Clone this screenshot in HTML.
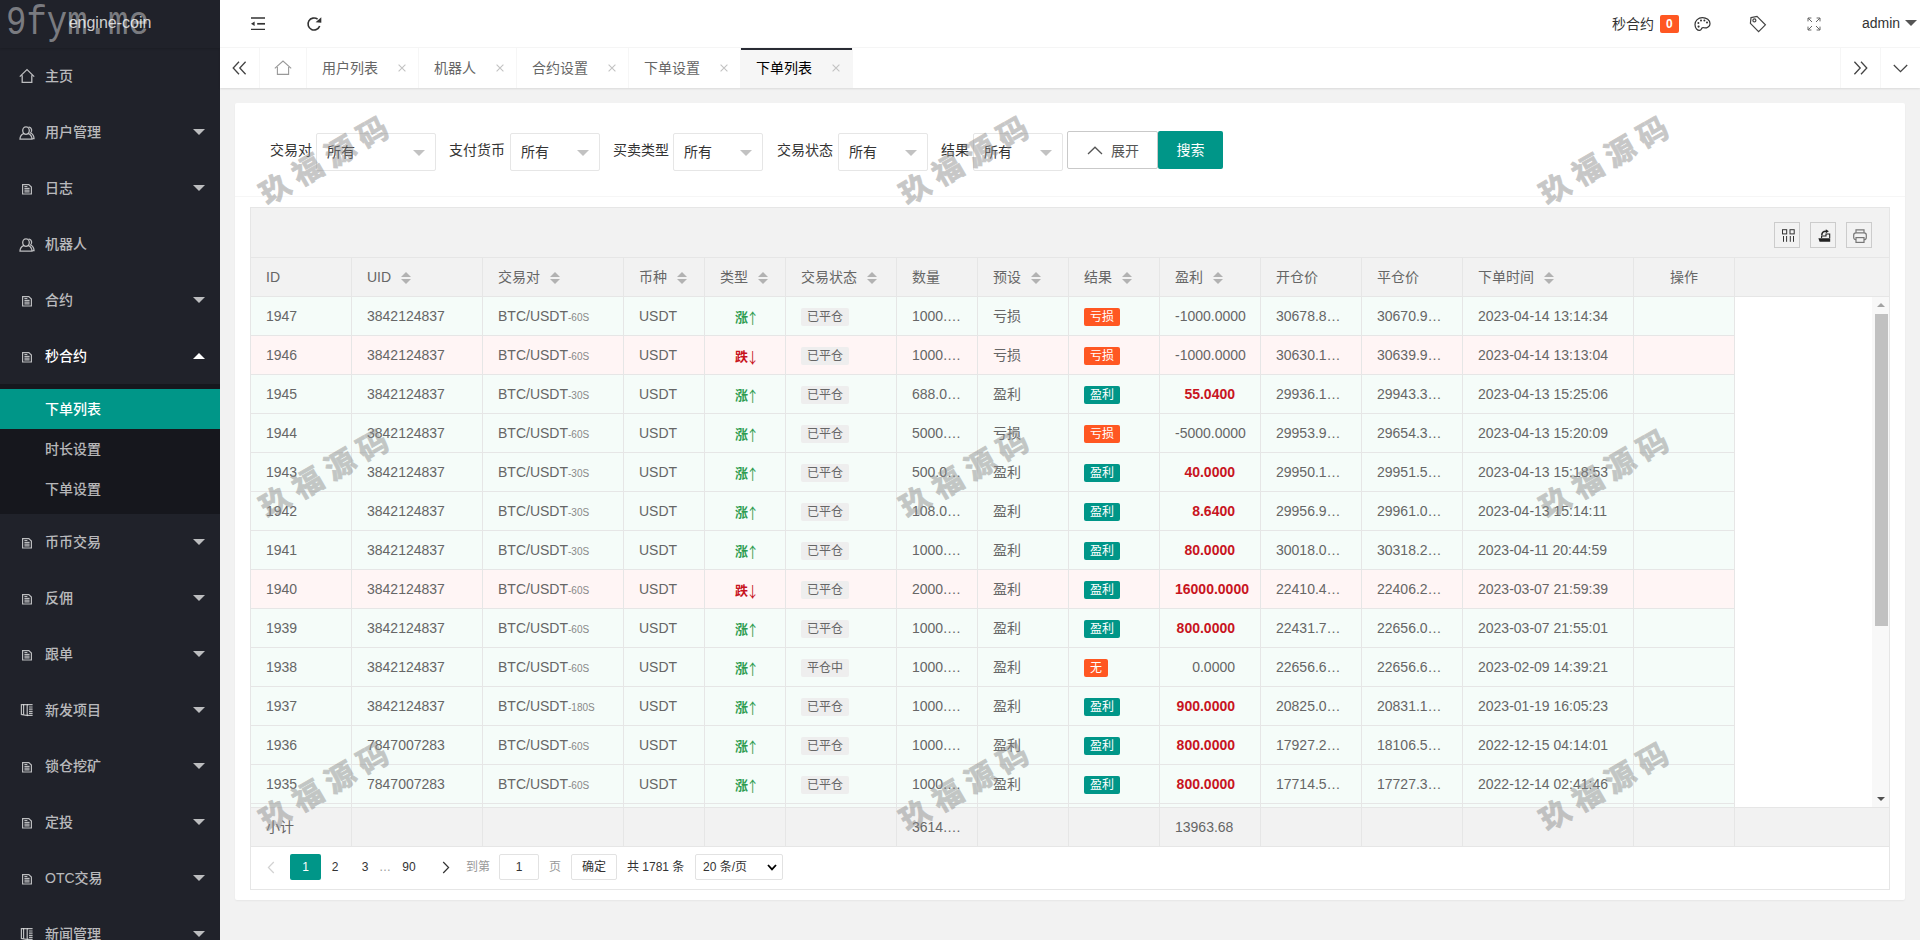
<!DOCTYPE html>
<html lang="zh-CN">
<head>
<meta charset="utf-8">
<title>engine-coin</title>
<style>
*{box-sizing:border-box}
html,body{margin:0;padding:0}
body{width:1920px;height:940px;overflow:hidden;background:#f2f2f2;color:#333;font:14px/1 "Liberation Sans","Noto Sans CJK SC",sans-serif;position:relative}
ul,dl,dd,li{margin:0;padding:0;list-style:none}
svg{display:block}
/* side */
.side{position:absolute;left:0;top:0;width:220px;height:940px;background:#20222a;overflow:hidden}
.logo{position:absolute;left:0;top:0;width:220px;height:48px;line-height:46px;text-align:center;color:rgba(255,255,255,.8);font-size:16px;box-shadow:0 1px 2px 0 rgba(0,0,0,.15);background:#20222a;z-index:2}
.nav{position:absolute;left:0;top:48px;width:220px}
.nav .it{position:relative;height:56px;line-height:56px;padding-left:45px;color:rgba(255,255,255,.7);font-size:14px;font-weight:500}
.nav .it.on{color:#fff}
.nav .it .ic{position:absolute;left:19px;top:20px;width:16px;height:16px}
.nav .it .more{position:absolute;right:15px;top:25px;width:0;height:0;border:6px solid transparent;border-top-color:rgba(255,255,255,.7)}
.nav .it.on .more{top:19px;border-top-color:transparent;border-bottom-color:#fff}
.nav .sub{background:rgba(0,0,0,.3);padding:5px 0}
.nav .sub dd{height:40px;line-height:40px;padding-left:45px;color:rgba(255,255,255,.7);font-weight:500}
.nav .sub dd.this{background:#009688;color:#fff}
/* header */
.hd{position:absolute;left:220px;top:0;width:1700px;height:48px;background:#fff;border-bottom:1px solid #f6f6f6}
.hd .i{position:absolute}
.hd .txt{position:absolute;color:#333;font-size:14px;line-height:20px}
.badge{position:absolute;left:1440px;top:15px;height:18px;line-height:18px;padding:0 6px;font-size:12px;background:#ff5722;color:#fff;border-radius:2px;font-weight:bold}
/* tabs */
.tabs{position:absolute;left:220px;top:48px;width:1700px;height:40px;background:#fff;box-shadow:0 1px 2px 0 rgba(0,0,0,.1)}
.tabs .ctl{position:absolute;top:0;width:40px;height:40px}
.tabs .ctl.l{left:0;border-right:1px solid #f6f6f6}
.tabs .ctl.r1{left:1620px;border-left:1px solid #f6f6f6}
.tabs .ctl.r2{left:1660px;border-left:1px solid #f6f6f6}
.tabs ul{position:absolute;left:40px;top:0;height:40px;display:flex}
.tabs li{position:relative;height:40px;line-height:40px;padding:0 40px 0 15px;border-right:1px solid #f6f6f6;color:#666;font-size:14px;white-space:nowrap}
.tabs li.home{padding:0 15px;width:47px}
.tabs li.this{background:#f6f6f6;color:#000}
.tabs li.this:after{content:"";position:absolute;left:0;top:0;width:100%;height:2px;background:#292b34}
.tabs li .x{position:absolute;right:9px;top:13px;width:14px;height:14px}
/* card */
.card{position:absolute;left:235px;top:103px;width:1670px;height:797px;background:#fff;border-radius:2px;box-shadow:0 1px 2px 0 rgba(0,0,0,.05)}
.form{position:absolute;left:0;top:0;width:1670px;height:94px;border-bottom:1px solid #f6f6f6}
.form label{position:absolute;top:38px;line-height:18px;color:#333;font-size:14px}
.sel{position:absolute;top:30px;height:38px;border:1px solid #e6e6e6;border-radius:2px;background:#fff;line-height:38px;padding-left:10px;color:#333;font-size:14px}
.sel:after{content:"";position:absolute;right:10px;top:16px;border:6px solid transparent;border-top-color:#c2c2c2}
.sel span{position:relative;top:-1px}
.btn{position:absolute;top:28px;height:38px;line-height:38px;font-size:14px;text-align:center;border-radius:2px}
.btn.pri{left:832px;width:91px;border:1px solid #c9c9c9;background:#fff;color:#555}
.btn.ok{left:923px;width:65px;background:#009688;color:#fff}
/* table */
.tv{position:absolute;left:15px;top:104px;width:1640px;height:683px;border:1px solid #e6e6e6;background:#fff;overflow:hidden}
.tool{position:absolute;left:0;top:0;width:1638px;height:50px;background:#f2f2f2;border-bottom:1px solid #e6e6e6}
.tool .tb{position:absolute;top:14px;width:26px;height:26px;border:1px solid #ccc}
table{border-collapse:separate;border-spacing:0;table-layout:fixed;width:1484px}
th,td{height:39px;padding:0 15px;border-right:1px solid #e6e6e6;border-bottom:1px solid #e6e6e6;font-size:14px;color:#666;font-weight:normal;text-align:left;white-space:nowrap;overflow:hidden;line-height:20px}
.thd{position:absolute;left:0;top:50px;width:1638px;height:39px;background:#f2f2f2;border-bottom:1px solid #e6e6e6;overflow:hidden}
.thd th{background:#f2f2f2}
.thd th.s{padding-top:2px}
.tbd{position:absolute;left:0;top:89px;width:1621px;height:510px;overflow:hidden;background:#fff}
.tot{position:absolute;left:0;top:599px;width:1638px;height:40px;background:#f2f2f2;border-top:1px solid #e6e6e6;border-bottom:1px solid #e6e6e6;overflow:hidden}
.tot td{background:#f2f2f2;height:38px;border-bottom:0}
tr.rg td{background:#f5fcf9}
tr.rr td{background:#fff5f5}
td.c{text-align:center}
td.r{text-align:left}
.pw{display:inline-block;width:60px;text-align:right;white-space:nowrap}
.sort{display:inline-block;position:relative;width:10px;height:20px;margin-left:10px;vertical-align:middle;top:-1px}
.sort:before,.sort:after{content:"";position:absolute;left:0;border:5px solid transparent}
.sort:before{top:-1px;border-bottom-color:#b2b2b2}
.sort:after{top:11px;border-top-color:#b2b2b2}
.sec{font-size:10px;color:#888;line-height:0}
.up,.dn{font-weight:bold;font-size:13px;position:relative;top:1px;left:.5px}
.up{color:#2e9c50}
.dn{color:#c8141e}
.ar{font-family:"Noto Sans CJK SC",sans-serif;font-weight:normal;font-size:15px;margin:0 -4px 0 -3px;position:relative;top:2px;display:inline-block;transform:scaleX(.85)}
.st{display:inline-block;height:18px;line-height:18px;padding:0 6px;font-size:12px;background:#eee;color:#666;border-radius:2px}
.bd{display:inline-block;height:18px;line-height:18px;padding:0 6px;font-size:12px;color:#fff;border-radius:2px}
.bo{background:#ff5722}
.bg{background:#009688}
.pf{color:#c8141e;font-weight:bold}
/* scrollbar */
.sb{position:absolute;left:1621px;top:89px;width:17px;height:510px;background:#f8f8f8}
.sb .th{position:absolute;left:3px;top:17px;width:13px;height:312px;background:#c1c1c1}
.sb .a1{position:absolute;left:5px;top:6px;border:4px solid transparent;border-top-width:0;border-bottom:4px solid #a3a3a3}
.sb .a2{position:absolute;left:5px;bottom:6px;border:4px solid transparent;border-bottom-width:0;border-top:4px solid #505050}
/* page */
.pg{position:absolute;left:0;top:639px;width:1638px;height:41px;font-size:12px;color:#333}
.pg .p{position:absolute;top:7px;height:26px;line-height:26px;text-align:center}
.pg .cur{left:39px;width:31px;background:#009688;color:#fff;border-radius:2px}
.pg input,.pg .ipt{position:absolute;left:248px;top:7px;width:40px;height:26px;border:1px solid #e2e2e2;border-radius:2px;text-align:center;line-height:24px;background:#fff}
.pg .okb{left:320px;width:46px;border:1px solid #e2e2e2;border-radius:2px;line-height:24px;background:#fff}
.pg .lim{left:444px;width:88px;border:1px solid #e2e2e2;border-radius:2px;line-height:24px;text-align:left;padding-left:7px;background:#fff}
/* watermark */
.wm{position:absolute;font:bold 30px/1 "Noto Sans CJK SC","Liberation Sans",sans-serif;color:#8c8c8c;opacity:.48;-webkit-text-stroke:.8px #8c8c8c;letter-spacing:7.5px;white-space:nowrap;transform:translate(-50%,-50%) rotate(-30deg);pointer-events:none;z-index:50}
.wm0{position:absolute;left:6px;top:-2px;font:34px/50px "Liberation Mono",monospace;color:rgba(255,255,255,.42);transform:scale(1,1.18);transform-origin:0 50%;z-index:60;white-space:pre}
</style>
</head>
<body>
<div class="side">
  <div class="logo">engine-coin</div>
  <ul class="nav">
    <li><div class="it"><svg class="ic" viewBox="0 0 16 16"><path d="M0.8 8.6 L8 1.6 L15.2 8.6 M3.2 7.2 V14.3 H12.8 V7.2" fill="none" stroke="rgba(255,255,255,.7)" stroke-width="1.3"/></svg>主页</div></li>
    <li><div class="it"><svg class="ic" style="top:21px" viewBox="0 0 16 16"><g fill="none" stroke="rgba(255,255,255,.7)" stroke-width="1.3"><ellipse cx="7" cy="5.6" rx="3.3" ry="3.7"/><path d="M4.6 8.6 C2.4 9.6 1 11.2 1 14.2 H13 C13 11.2 11.6 9.6 9.4 8.6"/><path d="M9.6 2.2 C12.6 1.8 13.6 6 11.6 8 C13.8 9 15 10.8 15 13.6 H13.4"/></g></svg>用户管理<i class="more"></i></div></li>
    <li><div class="it"><svg class="ic" viewBox="0 0 16 16"><g fill="none" stroke="rgba(255,255,255,.7)" stroke-width="1.2"><path d="M3.6 4.6 H9.8 L12.4 7 V14 H3.6 Z"/><path d="M5.4 8.3 H10.6 M5.4 10.1 H10.6 M5.4 11.9 H10.6 M5.4 6.5 H8.4"/></g></svg>日志<i class="more"></i></div></li>
    <li><div class="it"><svg class="ic" style="top:21px" viewBox="0 0 16 16"><g fill="none" stroke="rgba(255,255,255,.7)" stroke-width="1.3"><ellipse cx="7" cy="5.6" rx="3.3" ry="3.7"/><path d="M4.6 8.6 C2.4 9.6 1 11.2 1 14.2 H13 C13 11.2 11.6 9.6 9.4 8.6"/><path d="M9.6 2.2 C12.6 1.8 13.6 6 11.6 8 C13.8 9 15 10.8 15 13.6 H13.4"/></g></svg>机器人</div></li>
    <li><div class="it"><svg class="ic" viewBox="0 0 16 16"><g fill="none" stroke="rgba(255,255,255,.7)" stroke-width="1.2"><path d="M3.6 4.6 H9.8 L12.4 7 V14 H3.6 Z"/><path d="M5.4 8.3 H10.6 M5.4 10.1 H10.6 M5.4 11.9 H10.6 M5.4 6.5 H8.4"/></g></svg>合约<i class="more"></i></div></li>
    <li><div class="it on"><svg class="ic" viewBox="0 0 16 16"><g fill="none" stroke="rgba(255,255,255,.7)" stroke-width="1.2"><path d="M3.6 4.6 H9.8 L12.4 7 V14 H3.6 Z"/><path d="M5.4 8.3 H10.6 M5.4 10.1 H10.6 M5.4 11.9 H10.6 M5.4 6.5 H8.4"/></g></svg>秒合约<i class="more"></i></div>
      <dl class="sub"><dd class="this">下单列表</dd><dd>时长设置</dd><dd>下单设置</dd></dl>
    </li>
    <li><div class="it"><svg class="ic" viewBox="0 0 16 16"><g fill="none" stroke="rgba(255,255,255,.7)" stroke-width="1.2"><path d="M3.6 4.6 H9.8 L12.4 7 V14 H3.6 Z"/><path d="M5.4 8.3 H10.6 M5.4 10.1 H10.6 M5.4 11.9 H10.6 M5.4 6.5 H8.4"/></g></svg>币币交易<i class="more"></i></div></li>
    <li><div class="it"><svg class="ic" viewBox="0 0 16 16"><g fill="none" stroke="rgba(255,255,255,.7)" stroke-width="1.2"><path d="M3.6 4.6 H9.8 L12.4 7 V14 H3.6 Z"/><path d="M5.4 8.3 H10.6 M5.4 10.1 H10.6 M5.4 11.9 H10.6 M5.4 6.5 H8.4"/></g></svg>反佣<i class="more"></i></div></li>
    <li><div class="it"><svg class="ic" viewBox="0 0 16 16"><g fill="none" stroke="rgba(255,255,255,.7)" stroke-width="1.2"><path d="M3.6 4.6 H9.8 L12.4 7 V14 H3.6 Z"/><path d="M5.4 8.3 H10.6 M5.4 10.1 H10.6 M5.4 11.9 H10.6 M5.4 6.5 H8.4"/></g></svg>跟单<i class="more"></i></div></li>
    <li><div class="it"><svg class="ic" viewBox="0 0 16 16"><g fill="none" stroke="rgba(255,255,255,.7)" stroke-width="1.2"><path d="M2.4 2.6 H8.2 V13.6 L2.4 12.4 Z"/><path d="M4.6 2.6 V12.6 M8.2 2.6 H13.6 M8.2 13.4 H13.6 M10 5 H13.6 M10 7.2 H13.6 M10 9.4 H13.6 M10 11.4 H13.6"/></g></svg>新发项目<i class="more"></i></div></li>
    <li><div class="it"><svg class="ic" viewBox="0 0 16 16"><g fill="none" stroke="rgba(255,255,255,.7)" stroke-width="1.2"><path d="M3.6 4.6 H9.8 L12.4 7 V14 H3.6 Z"/><path d="M5.4 8.3 H10.6 M5.4 10.1 H10.6 M5.4 11.9 H10.6 M5.4 6.5 H8.4"/></g></svg>锁仓挖矿<i class="more"></i></div></li>
    <li><div class="it"><svg class="ic" viewBox="0 0 16 16"><g fill="none" stroke="rgba(255,255,255,.7)" stroke-width="1.2"><path d="M3.6 4.6 H9.8 L12.4 7 V14 H3.6 Z"/><path d="M5.4 8.3 H10.6 M5.4 10.1 H10.6 M5.4 11.9 H10.6 M5.4 6.5 H8.4"/></g></svg>定投<i class="more"></i></div></li>
    <li><div class="it"><svg class="ic" viewBox="0 0 16 16"><g fill="none" stroke="rgba(255,255,255,.7)" stroke-width="1.2"><path d="M3.6 4.6 H9.8 L12.4 7 V14 H3.6 Z"/><path d="M5.4 8.3 H10.6 M5.4 10.1 H10.6 M5.4 11.9 H10.6 M5.4 6.5 H8.4"/></g></svg>OTC交易<i class="more"></i></div></li>
    <li><div class="it"><svg class="ic" viewBox="0 0 16 16"><g fill="none" stroke="rgba(255,255,255,.7)" stroke-width="1.2"><path d="M2.4 2.6 H8.2 V13.6 L2.4 12.4 Z"/><path d="M4.6 2.6 V12.6 M8.2 2.6 H13.6 M8.2 13.4 H13.6 M10 5 H13.6 M10 7.2 H13.6 M10 9.4 H13.6 M10 11.4 H13.6"/></g></svg>新闻管理<i class="more"></i></div></li>
  </ul>
</div>

<div class="hd">
  <svg class="i" style="left:30px;top:16px" width="16" height="16" viewBox="0 0 16 16"><g fill="none" stroke="#333"><path d="M1 2 H15 M1 13.4 H15" stroke-width="1.3"/><path d="M7.2 7.8 H15" stroke-width="1.7"/></g><path d="M1 7.8 L4.6 5.6 V10 Z" fill="#333"/></svg>
  <svg class="i" style="left:86px;top:12px" width="16" height="20" viewBox="0 0 16 20"><path d="M11.6 7.2 A6 6 0 1 0 13.7 14" fill="none" stroke="#333" stroke-width="1.6"/><path d="M15.3 5.2 V10.7 L9.6 10.3 Z" fill="#333"/></svg>
  <span class="txt" style="left:1392px;top:14px">秒合约</span>
  <span class="badge">0</span>
  <svg class="i" style="left:1474px;top:16px" width="17" height="16" viewBox="0 0 17 16"><g fill="none" stroke="#333" stroke-width="1.2"><path d="M8.4 1.6 C4.2 1.6 1 4.6 1 8.6 C1 12 3.2 14.4 5.6 14.4 C7.4 14.4 7.2 12.8 8 12 C9 11 10.6 12.4 12.6 11.8 C14.8 11.2 16 9.6 16 7.6 C16 4.2 12.6 1.6 8.4 1.6 Z"/></g><g fill="#333"><circle cx="4.6" cy="10.6" r="1.1"/><circle cx="4.4" cy="7" r="1"/><circle cx="7" cy="4.6" r="1"/><circle cx="10.4" cy="4.4" r="1"/><circle cx="13" cy="6.6" r="1"/></g></svg>
  <svg class="i" style="left:1529px;top:15px" width="18" height="18" viewBox="0 0 18 18"><g fill="none" stroke="#444" stroke-width="1.2"><path d="M2 2.6 L8 1.4 L16.4 9.8 L9.6 16.6 L1.4 8.4 Z" /><circle cx="5.4" cy="5.4" r="1.5"/></g></svg>
  <svg class="i" style="left:1587px;top:17px" width="14" height="14" viewBox="0 0 14 14"><g fill="none" stroke="#666" stroke-width="1"><path d="M1 4.4 V1 H4.4 M1 1 L5 5 M9.6 1 H13 V4.4 M13 1 L9 5 M1 9.6 V13 H4.4 M1 13 L5 9 M13 9.6 V13 H9.6 M13 13 L9 9"/></g></svg>
  <span class="txt" style="left:1642px;top:13px;font-size:14px">admin</span>
  <i class="i" style="left:1685px;top:20px;border:6px solid transparent;border-top-color:#555"></i>
</div>

<div class="tabs">
  <div class="ctl l"><svg style="position:absolute;left:12px;top:13px" width="15" height="14" viewBox="0 0 15 14"><path d="M7 0.8 L1.2 7 L7 13.2 M13.6 0.8 L7.8 7 L13.6 13.2" fill="none" stroke="#444" stroke-width="1.3"/></svg></div>
  <ul>
    <li class="home"><svg style="position:absolute;left:14px;top:12px" width="18" height="16" viewBox="0 0 18 16"><path d="M0.8 8.4 L9 1 L17.2 8.4 M3.4 7 V14.4 H14.6 V7" fill="none" stroke="#999" stroke-width="1.1"/></svg></li>
    <li>用户列表<svg class="x" viewBox="0 0 14 14"><path d="M3.6 3.6 L10.4 10.4 M10.4 3.6 L3.6 10.4" fill="none" stroke="#c2c2c2" stroke-width="1.1"/></svg></li>
    <li>机器人<svg class="x" viewBox="0 0 14 14"><path d="M3.6 3.6 L10.4 10.4 M10.4 3.6 L3.6 10.4" fill="none" stroke="#c2c2c2" stroke-width="1.1"/></svg></li>
    <li>合约设置<svg class="x" viewBox="0 0 14 14"><path d="M3.6 3.6 L10.4 10.4 M10.4 3.6 L3.6 10.4" fill="none" stroke="#c2c2c2" stroke-width="1.1"/></svg></li>
    <li>下单设置<svg class="x" viewBox="0 0 14 14"><path d="M3.6 3.6 L10.4 10.4 M10.4 3.6 L3.6 10.4" fill="none" stroke="#c2c2c2" stroke-width="1.1"/></svg></li>
    <li class="this">下单列表<svg class="x" viewBox="0 0 14 14"><path d="M3.6 3.6 L10.4 10.4 M10.4 3.6 L3.6 10.4" fill="none" stroke="#c2c2c2" stroke-width="1.1"/></svg></li>
  </ul>
  <div class="ctl r1"><svg style="position:absolute;left:12px;top:13px" width="15" height="14" viewBox="0 0 15 14"><path d="M1.4 0.8 L7.2 7 L1.4 13.2 M8 0.8 L13.8 7 L8 13.2" fill="none" stroke="#444" stroke-width="1.3"/></svg></div>
  <div class="ctl r2"><svg style="position:absolute;left:12px;top:16px" width="15" height="9" viewBox="0 0 15 9"><path d="M0.8 1 L7.5 7.6 L14.2 1" fill="none" stroke="#444" stroke-width="1.3"/></svg></div>
</div>

<div class="card">
  <div class="form">
    <label style="left:35px">交易对</label><div class="sel" style="left:81px;width:120px"><span>所有</span></div>
    <label style="left:214px">支付货币</label><div class="sel" style="left:275px;width:90px"><span>所有</span></div>
    <label style="left:378px">买卖类型</label><div class="sel" style="left:438px;width:90px"><span>所有</span></div>
    <label style="left:542px">交易状态</label><div class="sel" style="left:603px;width:90px"><span>所有</span></div>
    <label style="left:706px">结果</label><div class="sel" style="left:738px;width:90px"><span>所有</span></div>
    <div class="btn pri"><svg style="position:absolute;left:19px;top:14px" width="16" height="9" viewBox="0 0 16 9"><path d="M1 8 L8 1.2 L15 8" fill="none" stroke="#555" stroke-width="1.3"/></svg><span style="margin-left:25px">展开</span></div>
    <div class="btn ok">搜索</div>
  </div>
  <div class="tv">
    <div class="tool">
      <div class="tb" style="left:1523px"><svg width="24" height="24" viewBox="0 0 24 24"><g fill="none" stroke="#333" stroke-width="1"><rect x="7.5" y="6.7" width="4.2" height="4.2"/><rect x="15" y="6.7" width="4.2" height="4.2"/><path d="M8.5 13 V18.8 M11.6 13 V18.8 M15.3 13 V18.8 M18.5 13 V18.8" stroke-width="1"/></g></svg></div>
      <div class="tb" style="left:1559px"><svg width="24" height="24" viewBox="0 0 24 24"><path d="M7.4 15.2 H19.2 V18.8 H8.6 Z" fill="#222"/><path d="M10.6 15 V13 H15 V11 H18.7 V15" fill="none" stroke="#222" stroke-width="1.1"/><path d="M10.8 12.2 C10.8 9.8 12.4 8.4 15 8.3" fill="none" stroke="#222" stroke-width="1.5"/><path d="M14.8 6.3 L17.9 8.3 L14.8 10.3 Z" fill="#222"/></svg></div>
      <div class="tb" style="left:1595px"><svg width="24" height="24" viewBox="0 0 24 24"><g fill="none" stroke="#777" stroke-width="1.2"><path d="M9 9.8 V6.8 H17 V9.8"/><rect x="6.7" y="9.8" width="12.6" height="6.8" rx="2.2"/><rect x="9" y="14.6" width="8" height="4.8" fill="#f2f2f2"/></g></svg></div>
    </div>
    <div class="thd">
      <table><colgroup><col style="width:101px"><col style="width:131px"><col style="width:141px"><col style="width:81px"><col style="width:81px"><col style="width:111px"><col style="width:81px"><col style="width:91px"><col style="width:91px"><col style="width:101px"><col style="width:101px"><col style="width:101px"><col style="width:171px"><col style="width:101px"></colgroup><tr><th>ID</th><th class="s">UID<i class="sort"></i></th><th class="s">交易对<i class="sort"></i></th><th class="s">币种<i class="sort"></i></th><th class="s">类型<i class="sort"></i></th><th class="s">交易状态<i class="sort"></i></th><th>数量</th><th class="s">预设<i class="sort"></i></th><th class="s">结果<i class="sort"></i></th><th class="s">盈利<i class="sort"></i></th><th>开仓价</th><th>平仓价</th><th class="s">下单时间<i class="sort"></i></th><th style="text-align:center">操作</th></tr></table>
    </div>
    <div class="tbd">
      <table><colgroup><col style="width:101px"><col style="width:131px"><col style="width:141px"><col style="width:81px"><col style="width:81px"><col style="width:111px"><col style="width:81px"><col style="width:91px"><col style="width:91px"><col style="width:101px"><col style="width:101px"><col style="width:101px"><col style="width:171px"><col style="width:101px"></colgroup>
<tr class="rg"><td>1947</td><td>3842124837</td><td>BTC/USDT<span class="sec">-60S</span></td><td>USDT</td><td class="c"><span class="up">涨<span class="ar">↑</span></span></td><td><span class="st">已平仓</span></td><td>1000.…</td><td>亏损</td><td><span class="bd bo">亏损</span></td><td class="r"><span class="pw">-1000.0000</span></td><td>30678.8…</td><td>30670.9…</td><td>2023-04-14 13:14:34</td><td></td></tr>
<tr class="rr"><td>1946</td><td>3842124837</td><td>BTC/USDT<span class="sec">-60S</span></td><td>USDT</td><td class="c"><span class="dn">跌<span class="ar">↓</span></span></td><td><span class="st">已平仓</span></td><td>1000.…</td><td>亏损</td><td><span class="bd bo">亏损</span></td><td class="r"><span class="pw">-1000.0000</span></td><td>30630.1…</td><td>30639.9…</td><td>2023-04-14 13:13:04</td><td></td></tr>
<tr class="rg"><td>1945</td><td>3842124837</td><td>BTC/USDT<span class="sec">-30S</span></td><td>USDT</td><td class="c"><span class="up">涨<span class="ar">↑</span></span></td><td><span class="st">已平仓</span></td><td>688.0…</td><td>盈利</td><td><span class="bd bg">盈利</span></td><td class="r"><span class="pw"><b class="pf">55.0400</b></span></td><td>29936.1…</td><td>29943.3…</td><td>2023-04-13 15:25:06</td><td></td></tr>
<tr class="rg"><td>1944</td><td>3842124837</td><td>BTC/USDT<span class="sec">-60S</span></td><td>USDT</td><td class="c"><span class="up">涨<span class="ar">↑</span></span></td><td><span class="st">已平仓</span></td><td>5000.…</td><td>亏损</td><td><span class="bd bo">亏损</span></td><td class="r"><span class="pw">-5000.0000</span></td><td>29953.9…</td><td>29654.3…</td><td>2023-04-13 15:20:09</td><td></td></tr>
<tr class="rg"><td>1943</td><td>3842124837</td><td>BTC/USDT<span class="sec">-30S</span></td><td>USDT</td><td class="c"><span class="up">涨<span class="ar">↑</span></span></td><td><span class="st">已平仓</span></td><td>500.0…</td><td>盈利</td><td><span class="bd bg">盈利</span></td><td class="r"><span class="pw"><b class="pf">40.0000</b></span></td><td>29950.1…</td><td>29951.5…</td><td>2023-04-13 15:18:53</td><td></td></tr>
<tr class="rg"><td>1942</td><td>3842124837</td><td>BTC/USDT<span class="sec">-30S</span></td><td>USDT</td><td class="c"><span class="up">涨<span class="ar">↑</span></span></td><td><span class="st">已平仓</span></td><td>108.0…</td><td>盈利</td><td><span class="bd bg">盈利</span></td><td class="r"><span class="pw"><b class="pf">8.6400</b></span></td><td>29956.9…</td><td>29961.0…</td><td>2023-04-13 15:14:11</td><td></td></tr>
<tr class="rg"><td>1941</td><td>3842124837</td><td>BTC/USDT<span class="sec">-30S</span></td><td>USDT</td><td class="c"><span class="up">涨<span class="ar">↑</span></span></td><td><span class="st">已平仓</span></td><td>1000.…</td><td>盈利</td><td><span class="bd bg">盈利</span></td><td class="r"><span class="pw"><b class="pf">80.0000</b></span></td><td>30018.0…</td><td>30318.2…</td><td>2023-04-11 20:44:59</td><td></td></tr>
<tr class="rr"><td>1940</td><td>3842124837</td><td>BTC/USDT<span class="sec">-60S</span></td><td>USDT</td><td class="c"><span class="dn">跌<span class="ar">↓</span></span></td><td><span class="st">已平仓</span></td><td>2000.…</td><td>盈利</td><td><span class="bd bg">盈利</span></td><td class="r"><span class="pw"><b class="pf">16000.0000</b></span></td><td>22410.4…</td><td>22406.2…</td><td>2023-03-07 21:59:39</td><td></td></tr>
<tr class="rg"><td>1939</td><td>3842124837</td><td>BTC/USDT<span class="sec">-60S</span></td><td>USDT</td><td class="c"><span class="up">涨<span class="ar">↑</span></span></td><td><span class="st">已平仓</span></td><td>1000.…</td><td>盈利</td><td><span class="bd bg">盈利</span></td><td class="r"><span class="pw"><b class="pf">800.0000</b></span></td><td>22431.7…</td><td>22656.0…</td><td>2023-03-07 21:55:01</td><td></td></tr>
<tr class="rg"><td>1938</td><td>3842124837</td><td>BTC/USDT<span class="sec">-60S</span></td><td>USDT</td><td class="c"><span class="up">涨<span class="ar">↑</span></span></td><td><span class="st">平仓中</span></td><td>1000.…</td><td>盈利</td><td><span class="bd bo">无</span></td><td class="r"><span class="pw">0.0000</span></td><td>22656.6…</td><td>22656.6…</td><td>2023-02-09 14:39:21</td><td></td></tr>
<tr class="rg"><td>1937</td><td>3842124837</td><td>BTC/USDT<span class="sec">-180S</span></td><td>USDT</td><td class="c"><span class="up">涨<span class="ar">↑</span></span></td><td><span class="st">已平仓</span></td><td>1000.…</td><td>盈利</td><td><span class="bd bg">盈利</span></td><td class="r"><span class="pw"><b class="pf">900.0000</b></span></td><td>20825.0…</td><td>20831.1…</td><td>2023-01-19 16:05:23</td><td></td></tr>
<tr class="rg"><td>1936</td><td>7847007283</td><td>BTC/USDT<span class="sec">-60S</span></td><td>USDT</td><td class="c"><span class="up">涨<span class="ar">↑</span></span></td><td><span class="st">已平仓</span></td><td>1000.…</td><td>盈利</td><td><span class="bd bg">盈利</span></td><td class="r"><span class="pw"><b class="pf">800.0000</b></span></td><td>17927.2…</td><td>18106.5…</td><td>2022-12-15 04:14:01</td><td></td></tr>
<tr class="rg"><td>1935</td><td>7847007283</td><td>BTC/USDT<span class="sec">-60S</span></td><td>USDT</td><td class="c"><span class="up">涨<span class="ar">↑</span></span></td><td><span class="st">已平仓</span></td><td>1000.…</td><td>盈利</td><td><span class="bd bg">盈利</span></td><td class="r"><span class="pw"><b class="pf">800.0000</b></span></td><td>17714.5…</td><td>17727.3…</td><td>2022-12-14 02:41:46</td><td></td></tr>
<tr class="rg"><td>1934</td><td>7847007283</td><td>BTC/USDT<span class="sec">-60S</span></td><td>USDT</td><td class="c"><span class="up">涨<span class="ar">↑</span></span></td><td><span class="st">已平仓</span></td><td>1000.…</td><td>盈利</td><td><span class="bd bg">盈利</span></td><td class="r"><span class="pw"><b class="pf">800.0000</b></span></td><td>17714.5…</td><td>17727.3…</td><td>2022-12-14 02:40:12</td><td></td></tr>
      </table>
    </div>
    <div class="sb"><i class="a1"></i><div class="th"></div><i class="a2"></i></div>
    <div class="tot">
      <table><colgroup><col style="width:101px"><col style="width:131px"><col style="width:141px"><col style="width:81px"><col style="width:81px"><col style="width:111px"><col style="width:81px"><col style="width:91px"><col style="width:91px"><col style="width:101px"><col style="width:101px"><col style="width:101px"><col style="width:171px"><col style="width:101px"></colgroup><tr><td>小计</td><td></td><td></td><td></td><td></td><td></td><td>3614.…</td><td></td><td></td><td>13963.68</td><td></td><td></td><td></td><td></td></tr></table>
    </div>
    <div class="pg">
      <svg style="position:absolute;left:16px;top:14px" width="8" height="13" viewBox="0 0 8 13"><path d="M6.8 1 L1.4 6.5 L6.8 12" fill="none" stroke="#d2d2d2" stroke-width="1.2"/></svg>
      <span class="p cur">1</span>
      <span class="p" style="left:74px;width:20px">2</span>
      <span class="p" style="left:104px;width:20px">3</span>
      <span class="p" style="left:124px;width:20px;color:#999">…</span>
      <span class="p" style="left:147px;width:22px">90</span>
      <svg style="position:absolute;left:191px;top:14px" width="8" height="13" viewBox="0 0 8 13"><path d="M1.2 1 L6.6 6.5 L1.2 12" fill="none" stroke="#333" stroke-width="1.2"/></svg>
      <span class="p" style="left:215px;color:#999">到第</span>
      <span class="ipt">1</span>
      <span class="p" style="left:298px;color:#999">页</span>
      <span class="p okb">确定</span>
      <span class="p" style="left:376px">共 1781 条</span>
      <span class="p lim">20 条/页<svg style="position:absolute;right:5px;top:9px" width="10" height="7" viewBox="0 0 10 7"><path d="M1 1 L5 5.4 L9 1" fill="none" stroke="#000" stroke-width="1.8"/></svg></span>
    </div>
  </div>
</div>

<div class="wm0">9fym.me</div>
<div class="wm" style="left:325.5px;top:156.7px">玖福源码</div>
<div class="wm" style="left:965.5px;top:156.7px">玖福源码</div>
<div class="wm" style="left:1605.5px;top:156.7px">玖福源码</div>
<div class="wm" style="left:325.5px;top:470px">玖福源码</div>
<div class="wm" style="left:965.5px;top:470px">玖福源码</div>
<div class="wm" style="left:1605.5px;top:470px">玖福源码</div>
<div class="wm" style="left:325.5px;top:783.4px">玖福源码</div>
<div class="wm" style="left:965.5px;top:783.4px">玖福源码</div>
<div class="wm" style="left:1605.5px;top:783.4px">玖福源码</div>

</body>
</html>
